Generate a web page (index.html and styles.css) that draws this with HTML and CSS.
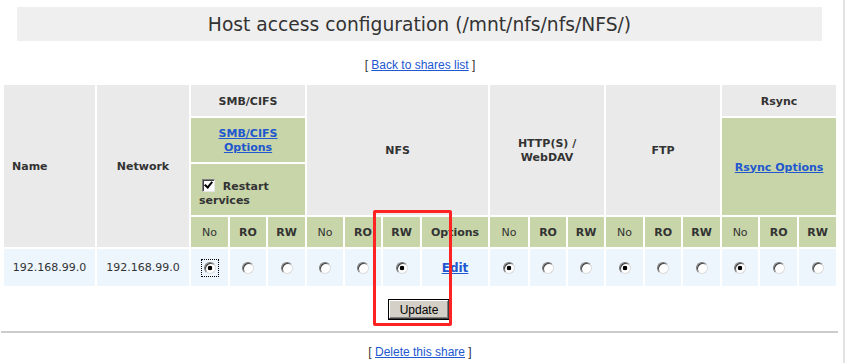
FILE: index.html
```html
<!DOCTYPE html>
<html>
<head>
	<meta charset="utf-8">
	<title>Host access configuration</title>
	<link rel="stylesheet" href="styles.css">
</head>
<body>
	<div class="page">
		<h1 class="title">Host access configuration (/mnt/nfs/nfs/NFS/)</h1>
		<p class="nav">[ <a href="#">Back to shares list</a> ]</p>
		<form class="hosts">
			<table class="access">
				<colgroup>
					<col class="c-name"><col class="c-net">
					<col class="c37"><col class="c36"><col class="c37">
					<col class="c36"><col class="c36"><col class="c37"><col class="c-opt">
					<col class="c38"><col class="c36"><col class="c36">
					<col class="c37"><col class="c36"><col class="c37">
					<col class="c36"><col class="c37"><col class="c37">
				</colgroup>
				<tr class="r1">
					<th rowspan="4" class="left">Name</th>
					<th rowspan="4">Network</th>
					<th colspan="3">SMB/CIFS</th>
					<th colspan="4" rowspan="3">NFS</th>
					<th colspan="3" rowspan="3">HTTP(S) /<br>WebDAV</th>
					<th colspan="3" rowspan="3">FTP</th>
					<th colspan="3">Rsync</th>
				</tr>
				<tr class="r2">
					<th colspan="3" class="green"><a href="#">SMB/CIFS<br>Options</a></th>
					<th colspan="3" rowspan="2" class="green"><a href="#">Rsync Options</a></th>
				</tr>
				<tr class="r3">
					<th colspan="3" class="green restart-cell"><label><input type="checkbox" class="restart" checked> Restart services</label></th>
				</tr>
				<tr class="r4">
					<th class="green thin">No</th><th class="green">RO</th><th class="green">RW</th>
					<th class="green thin">No</th><th class="green">RO</th><th class="green">RW</th><th class="green">Options</th>
					<th class="green thin">No</th><th class="green">RO</th><th class="green">RW</th>
					<th class="green thin">No</th><th class="green">RO</th><th class="green">RW</th>
					<th class="green thin">No</th><th class="green">RO</th><th class="green">RW</th>
				</tr>
				<tr class="row">
					<td>192.168.99.0</td>
					<td>192.168.99.0</td>
					<td><span class="focus"><input type="radio" class="opt" name="smb" checked></span></td>
					<td><input type="radio" class="opt" name="smb"></td>
					<td><input type="radio" class="opt" name="smb"></td>
					<td><input type="radio" class="opt" name="nfs"></td>
					<td><input type="radio" class="opt" name="nfs"></td>
					<td><input type="radio" class="opt" name="nfs" checked></td>
					<td><a href="#" class="edit">Edit</a></td>
					<td><input type="radio" class="opt" name="http" checked></td>
					<td><input type="radio" class="opt" name="http"></td>
					<td><input type="radio" class="opt" name="http"></td>
					<td><input type="radio" class="opt" name="ftp" checked></td>
					<td><input type="radio" class="opt" name="ftp"></td>
					<td><input type="radio" class="opt" name="ftp"></td>
					<td><input type="radio" class="opt" name="rsync" checked></td>
					<td><input type="radio" class="opt" name="rsync"></td>
					<td><input type="radio" class="opt" name="rsync"></td>
				</tr>
			</table>
			<div class="actions"><button type="button" class="update">Update</button></div>
		</form>
		<hr class="rule">
		<p class="nav bottom">[ <a href="#">Delete this share</a> ]</p>
		<div class="mark"></div>
	</div>
</body>
</html>
```

FILE: styles.css
```css
body{margin: 0;background: #ffffff;color: #333333;font-family: "DejaVu Sans", Verdana, sans-serif;}
a{color: #2157cf;}
.page{width: 840px;padding-right: 3px;border-right: 2px solid #e2e2e2;min-height: 100vh;position: relative;overflow: hidden;}
.title{margin: 7px 18px 0 17px;height: 34px;line-height: 35px;background: #efefef;font-size: 18.7px;font-weight: normal;text-align: center;color: #333333;}
.nav{margin: 16px 0 0;line-height: 16px;font-family: "Liberation Sans", Tahoma, sans-serif;font-size: 12px;text-align: center;color: #333333;}
.nav.bottom{margin-top: 11px;}
.hosts{margin: 10px 0 0;}
.access{table-layout: fixed;width: 836px;margin-left: 2px;border-spacing: 2px;font-size: 11px;line-height: 14px;}
.access th, .access td{padding: 2px 0 0;text-align: center;vertical-align: middle;}
.access th{background: #eaeaea;font-weight: bold;color: #333333;}
.access th.left{text-align: left;padding-left: 8px;}
.access th.green{background: #c7d5a9;}
.access th.thin{font-weight: normal;}
.access th a{color: #2157cf;}
.access td{background: #edf5fd;height: 36px;padding-top: 1px;}
.c-name{width: 91px;}
.c-net{width: 92px;}
.c-opt{width: 66px;}
.c36{width: 36px;}
.c37{width: 37px;}
.c38{width: 38px;}
.r1 th{height: 29px;}
.r2 th{height: 42px;}
.r3 th{height: 43px;}
.r4 th{height: 28px;}
.access th.restart-cell{text-align: left;padding: 8px 0 0 8px;}
.restart{appearance: none;position: relative;width: 13px;height: 13px;margin: 0 4px 0 3px;vertical-align: -2px;background: #ffffff;border: 1px solid;border-color: #808080 #e6e6e6 #e6e6e6 #808080;box-shadow: inset 1px 1px #404040;}
.restart::after{content: "";position: absolute;left: 3px;top: 0px;width: 3px;height: 6px;border: solid #000000;border-width: 0 2px 2px 0;transform: rotate(40deg);}
.opt{appearance: none;width: 12px;height: 12px;margin: 0;border-radius: 50%;border: 1px solid;border-color: #7a7a7a #dcdcdc #dcdcdc #7a7a7a;background: #ffffff;box-shadow: inset 1px 1px #404040;vertical-align: middle;}
.opt:checked{background: radial-gradient(circle, #000000 0 2px, #ffffff 2.6px);}
.focus{display: inline-block;padding: 2px;border: 1px dotted #000000;line-height: 0;vertical-align: middle;}
.edit{font-weight: bold;font-size: 12px;}
.actions{margin-top: 11px;text-align: center;line-height: 0;}
.update{height: 21px;width: 62px;margin-left: -2px;padding: 0;background: #d4d0c8;border: 1px solid #000000;box-shadow: inset -1px -1px #404040, inset 1px 1px #ffffff, inset -2px -2px #808080;font-family: "Liberation Sans", Tahoma, sans-serif;font-size: 12px;color: #000000;}
.rule{margin: 11px 2px 0 1px;height: 0;border: 0;border-top: 2px solid #cccccc;}
.mark{position: absolute;left: 373px;top: 210px;width: 73px;height: 110px;border: 3px solid #ff2222;border-radius: 2px;}
```
